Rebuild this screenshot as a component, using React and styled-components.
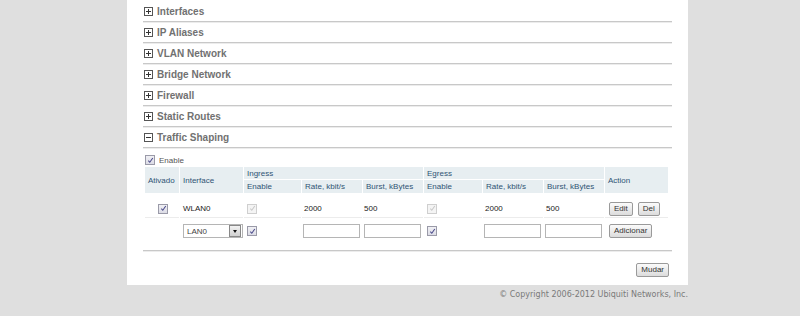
import React from 'react';
import styled, { createGlobalStyle } from 'styled-components';

const GlobalStyle = createGlobalStyle`
  html, body {
    margin: 0;
    padding: 0;
    background: #dfdfdf;
    font-family: "Liberation Sans", Arial, sans-serif;
  }
`;

const sections = ['Interfaces', 'IP Aliases', 'VLAN Network', 'Bridge Network', 'Firewall', 'Static Routes'];

const Page = styled.div`
  width: 800px;
  height: 316px;
  overflow: hidden;
`;

const Panel = styled.div`
  margin-left: 127px;
  width: 561px;
  background: #ffffff;
  padding: 3px 16px 8px 16px;
  box-sizing: border-box;
`;

const Section = styled.div`
  display: flex;
  align-items: center;
  gap: 4px;
  height: 19px;
  padding-left: 1px;
  margin-bottom: 2px;
  border-bottom: 1px solid #c8c8c8;
  box-shadow: 0 1px 0 #ececec;
  font-size: 10px;
  font-weight: bold;
  color: #717171;
  box-sizing: border-box;
  padding-bottom: 1px;
`;

const Toggle = styled.span`
  width: 7px;
  height: 7px;
  border: 1px solid #555;
  position: relative;
  flex: none;
  &::before {
    content: '';
    position: absolute;
    left: 1px;
    right: 1px;
    top: 3px;
    height: 1px;
    background: #333;
  }
  &::after {
    content: '';
    display: ${p => (p.open ? 'none' : 'block')};
    position: absolute;
    top: 1px;
    bottom: 1px;
    left: 3px;
    width: 1px;
    background: #333;
  }
`;

const Body = styled.div`
  padding: 5px 5px 0 2px;
`;

const EnableRow = styled.label`
  display: flex;
  align-items: center;
  gap: 4px;
  font-size: 8px;
  color: #555;
  margin-bottom: 2px;
`;

const Box = styled.span`
  display: inline-flex;
  align-items: center;
  justify-content: center;
  width: 8px;
  height: 8px;
  border: 1px solid ${p => (p.disabled ? '#cfcfcf' : '#9a9aa8')};
  background: ${p => (p.disabled ? '#f4f4f4' : 'linear-gradient(#f0f0f4, #dcdce6)')};
  vertical-align: middle;
  svg {
    width: 7px;
    height: 7px;
  }
`;

const Check = ({ disabled }) => (
  <Box disabled={disabled}>
    <svg viewBox="0 0 8 8">
      <path d="M1.5 4.2 L3.2 6 L6.6 1.2" fill="none" stroke={disabled ? '#c8c8c8' : '#4a4a8a'} strokeWidth="1.2" />
    </svg>
  </Box>
);

const Table = styled.table`
  border-collapse: separate;
  border-spacing: 1px 0;
  margin-left: -1px;
  width: 524px;
  font-size: 8px;
  table-layout: fixed;
`;

const Th = styled.th`
  background: #e7eef1;
  color: #2f5474;
  font-weight: normal;
  text-align: left;
  padding: 0 0 0 ${p => p.pad || 3}px;
  height: ${p => p.h || 12}px;
  border-top: ${p => (p.sub ? '1px solid #fff' : 'none')};
  vertical-align: middle;
`;

const Td = styled.td`
  color: #222;
  padding: 0 0 0 ${p => p.pad || 2}px;
  height: ${p => p.h}px;
  text-align: ${p => p.align || 'left'};
  border-bottom: ${p => (p.line ? '1px solid #ececec' : 'none')};
  vertical-align: middle;
  white-space: nowrap;
`;

const Input = styled.span`
  display: block;
  width: 55px;
  height: 12px;
  border: 1px solid #b5b5b5;
  background: #fff;
`;

const Select = styled.span`
  display: flex;
  align-items: center;
  justify-content: space-between;
  width: 55px;
  height: 12px;
  border: 1px solid #b5b5b5;
  padding-left: 3px;
  box-sizing: content-box;
  color: #444;
  font-size: 8px;
`;

const Arrow = styled.span`
  width: 10px;
  height: 10px;
  margin-right: 1px;
  border: 1px solid #888;
  background: linear-gradient(#f2f2f2, #d0d0d0);
  display: flex;
  align-items: center;
  justify-content: center;
  &::after {
    content: '';
    border-left: 2.5px solid transparent;
    border-right: 2.5px solid transparent;
    border-top: 3px solid #111;
  }
`;

const Button = styled.span`
  display: inline-block;
  font-size: 8px;
  color: #333;
  padding: 1px 4px;
  border: 1px solid #9a9a9a;
  border-radius: 2px;
  background: linear-gradient(#fbfbfb, #dcdcdc);
  margin-right: ${p => p.gap || 0}px;
  line-height: 10px;
`;

const Divider = styled.div`
  height: 1px;
  background: #c8c8c8;
  box-shadow: 0 1px 0 #ececec;
  margin: 6px -5px 0 -2px;
`;

const Actions = styled.div`
  display: flex;
  justify-content: flex-end;
  padding-top: 12px;
  margin-right: -2px;
`;

const Footer = styled.div`
  width: 561px;
  margin-left: 127px;
  text-align: right;
  font-family: "DejaVu Sans", Verdana, sans-serif;
  font-size: 8px;
  color: #7a7a7a;
  padding-top: 5px;
`;

export default function App() {
  return (
    <Page>
      <GlobalStyle />
      <Panel>
        {sections.map(s => (
          <Section key={s}>
            <Toggle />
            {s}
          </Section>
        ))}
        <Section>
          <Toggle open />
          Traffic Shaping
        </Section>
        <Body>
          <EnableRow>
            <Check />
            Enable
          </EnableRow>
          <Table>
            <colgroup>
              <col style={{ width: 34 }} />
              <col style={{ width: 63 }} />
              <col style={{ width: 57 }} />
              <col style={{ width: 60 }} />
              <col style={{ width: 60 }} />
              <col style={{ width: 58 }} />
              <col style={{ width: 60 }} />
              <col style={{ width: 60 }} />
              <col style={{ width: 63 }} />
            </colgroup>
            <thead>
              <tr>
                <Th rowSpan={2}>Ativado</Th>
                <Th rowSpan={2}>Interface</Th>
                <Th colSpan={3}>Ingress</Th>
                <Th colSpan={3}>Egress</Th>
                <Th rowSpan={2}>Action</Th>
              </tr>
              <tr>
                <Th sub h={13}>Enable</Th>
                <Th sub h={13}>Rate, kbit/s</Th>
                <Th sub h={13}>Burst, kBytes</Th>
                <Th sub h={13}>Enable</Th>
                <Th sub h={13}>Rate, kbit/s</Th>
                <Th sub h={13}>Burst, kBytes</Th>
              </tr>
            </thead>
            <tbody>
              <tr>
                <Td h={7} colSpan={9} />
              </tr>
              <tr>
                <Td h={17} line align="center" pad={0}><Check /></Td>
                <Td h={17} line pad={3}>WLAN0</Td>
                <Td h={17} line pad={3}><Check disabled /></Td>
                <Td h={17} line pad={2}>2000</Td>
                <Td h={17} line pad={1}>500</Td>
                <Td h={17} line pad={3}><Check disabled /></Td>
                <Td h={17} line pad={2}>2000</Td>
                <Td h={17} line pad={2}>500</Td>
                <Td h={17} line pad={4}>
                  <Button gap={5}>Edit</Button>
                  <Button>Del</Button>
                </Td>
              </tr>
              <tr>
                <Td h={26} />
                <Td h={26} pad={3}>
                  <Select>LAN0<Arrow /></Select>
                </Td>
                <Td h={26} pad={3}><Check /></Td>
                <Td h={26} pad={1}><Input /></Td>
                <Td h={26} pad={1}><Input /></Td>
                <Td h={26} pad={3}><Check /></Td>
                <Td h={26} pad={1}><Input /></Td>
                <Td h={26} pad={1}><Input /></Td>
                <Td h={26} pad={4}><Button>Adicionar</Button></Td>
              </tr>
            </tbody>
          </Table>
          <Divider />
          <Actions>
            <Button>Mudar</Button>
          </Actions>
        </Body>
      </Panel>
      <Footer>© Copyright 2006-2012 Ubiquiti Networks, Inc.</Footer>
    </Page>
  );
}
